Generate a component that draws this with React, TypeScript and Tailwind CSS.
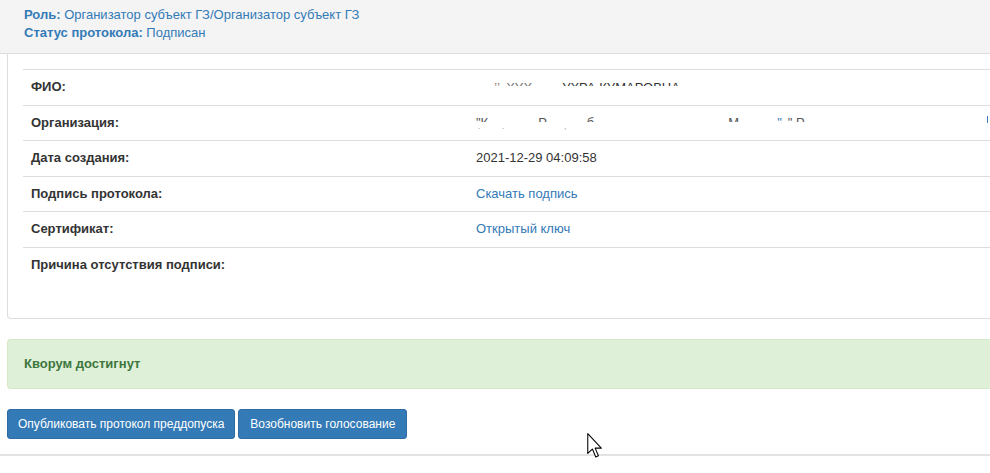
import React from 'react';

const rows = [
  { label: 'ФИО:', kind: 'fio' },
  { label: 'Организация:', kind: 'org' },
  { label: 'Дата создания:', kind: 'text', value: '2021-12-29 04:09:58' },
  { label: 'Подпись протокола:', kind: 'link', value: 'Скачать подпись' },
  { label: 'Сертификат:', kind: 'link', value: 'Открытый ключ' },
  { label: 'Причина отсутствия подписи:', kind: 'text', value: '' },
];

function Value({ row }: { row: (typeof rows)[number] }) {
  if (row.kind === 'fio') {
    return (
      <div className="relative h-[8px] overflow-hidden whitespace-pre pt-px">
        <span className="-mt-[1px] inline-block text-[#e06a1a]">-</span>
        <span className="ml-[14px] -mt-[1px] inline-block text-[#8a7a70]">ʼʼ</span>
        <span className="ml-[6px] -mt-[2px] inline-block text-[#777]">XYX</span>
        <span className="ml-[30px] -mt-[3px] inline-block">УХРА КУМАРОВНА</span>
      </div>
    );
  }
  if (row.kind === 'org') {
    return (
      <div className="relative h-[18px] whitespace-pre">
        <div className="h-[8px] overflow-hidden">
          <span className="-mt-[1px] inline-block text-[#555]">"К</span>
          <span className="ml-[50px] -mt-[1px] inline-block text-[#555]">Р</span>
          <span className="ml-[40px] -mt-[1px] inline-block text-[#555]">б</span>
          <span className="ml-[134px] -mt-[1px] inline-block text-[#555]">М</span>
          <span className="ml-[38px] -mt-[1px] inline-block text-[#3a7abf]">"</span>
          <span className="ml-[6px] -mt-[1px] inline-block text-[#555]">" Р</span>
        </div>
        <span className="absolute left-[2px] top-[9px] text-[8px] leading-none text-[#888]">.</span>
        <span className="absolute left-[26px] top-[9px] text-[8px] leading-none text-[#888]">.</span>
        <span className="absolute left-[88px] top-[9px] text-[8px] leading-none text-[#888]">,</span>
        <span className="absolute left-[511px] top-[2px] h-[7px] w-px bg-[#3a7abf]" />
      </div>
    );
  }
  if (row.kind === 'link') {
    return <span className="text-[#337ab7]">{row.value}</span>;
  }
  return <span>{row.value}</span>;
}

function Cursor() {
  return (
    <svg
      className="absolute left-[587px] top-[433px]"
      width="16"
      height="25"
      viewBox="0 0 12 19"
    >
      <path
        d="M0.5 0.5 L0.5 15.5 L4 12.2 L6.6 18.2 L8.6 17.3 L6.1 11.5 L10.8 11.5 Z"
        fill="#fff"
        stroke="#000"
        strokeWidth="0.8"
        strokeLinejoin="round"
      />
    </svg>
  );
}

export default function App() {
  return (
    <div className="relative h-[473px] w-[990px] overflow-hidden bg-white font-['Liberation_Sans',Arial,sans-serif] text-[13px] leading-[18px] text-[#333]">
      <div className="w-[1100px]">
        <div className="border-b border-[#ddd] bg-[#f4f4f4] pb-[11px] pl-[24px] pt-[6px] text-[#337ab7]">
          <div>
            <b>Роль:</b> Организатор субъект ГЗ/Организатор субъект ГЗ
          </div>
          <div>
            <b>Статус протокола:</b> Подписан
          </div>
        </div>

        <div className="ml-[7px] rounded-bl-[4px] border-b border-l border-[#ddd] px-[15px] pb-[15px] pt-[15px]">
          <div className="mb-[20px] border-t border-[#ddd]">
            {rows.map((row, i) => (
              <div
                key={row.label}
                className={`flex ${i < rows.length - 1 ? 'border-b border-[#ddd]' : ''}`}
              >
                <div className="w-[445px] shrink-0 px-2 py-2 font-bold leading-[18.6px]">{row.label}</div>
                <div className="flex-1 px-2 py-2 leading-[18.6px]">
                  <Value row={row} />
                </div>
              </div>
            ))}
          </div>
        </div>

        <div className="ml-[7px] mt-[20px] rounded-l-[4px] border border-r-0 border-[#d6e9c6] bg-[#dff0d8] px-[16px] py-[15px] font-bold text-[#3c763d]">
          Кворум достигнут
        </div>

        <div className="ml-[7px] mt-[20px] flex gap-[3px] text-[12px]">
          <button className="h-[30px] rounded-[3px] border border-[#2e6da4] bg-[#337ab7] px-[10px] text-white">
            Опубликовать протокол преддопуска
          </button>
          <button className="h-[30px] rounded-[3px] border border-[#2e6da4] bg-[#337ab7] px-[11px] text-white">
            Возобновить голосование
          </button>
        </div>

        <div className="mt-[15px] border-t-2 border-[#e3e3e3]" />
      </div>
      <Cursor />
    </div>
  );
}
